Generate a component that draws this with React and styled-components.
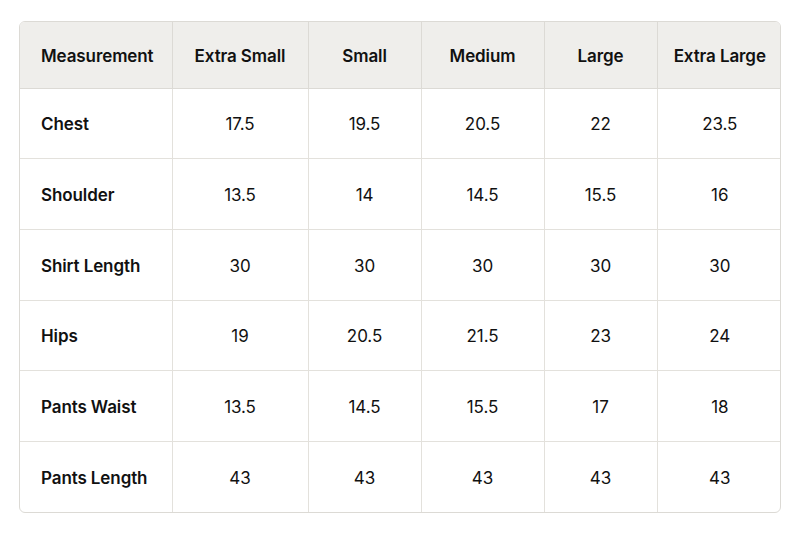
import React from 'react';
import styled, { createGlobalStyle } from 'styled-components';

const GlobalStyle = createGlobalStyle`
  html, body {
    margin: 0;
    padding: 0;
    background: #ffffff;
  }
  body {
    font-family: Inter, "Liberation Sans", sans-serif;
    color: #111111;
  }
`;

const columns = [
  { label: 'Measurement', width: 152 },
  { label: 'Extra Small', width: 136 },
  { label: 'Small', width: 113 },
  { label: 'Medium', width: 123 },
  { label: 'Large', width: 113 },
  { label: 'Extra Large', width: 125 },
];

const rows = [
  ['Chest', '17.5', '19.5', '20.5', '22', '23.5'],
  ['Shoulder', '13.5', '14', '14.5', '15.5', '16'],
  ['Shirt Length', '30', '30', '30', '30', '30'],
  ['Hips', '19', '20.5', '21.5', '23', '24'],
  ['Pants Waist', '13.5', '14.5', '15.5', '17', '18'],
  ['Pants Length', '43', '43', '43', '43', '43'],
];

const Page = styled.div`
  padding: 21px 19px;
`;

const Frame = styled.div`
  width: 762px;
  border: 1px solid #dcdad5;
  border-radius: 6px;
  overflow: hidden;
  box-sizing: border-box;
`;

const Table = styled.table`
  width: 100%;
  border-collapse: collapse;
  table-layout: fixed;
`;

const HeadCell = styled.th`
  height: 66px;
  padding: 2px ${(p) => (p.$first ? '21px' : '6px')} 0;
  background: #efeeeb;
  font-size: 17px;
  font-weight: 600;
  letter-spacing: -0.1px;
  text-align: ${(p) => (p.$first ? 'left' : 'center')};
  border-right: 1px solid #dcdad5;
  border-bottom: 1px solid #dcdad5;
  box-sizing: border-box;
  &:last-child {
    border-right: none;
  }
`;

const Cell = styled.td`
  height: 70.7px;
  padding: 2px ${(p) => (p.$first ? '21px' : '6px')} 0;
  font-size: 17px;
  font-weight: ${(p) => (p.$first ? 600 : 400)};
  letter-spacing: -0.1px;
  text-align: ${(p) => (p.$first ? 'left' : 'center')};
  border-right: 1px solid #e3e1dc;
  border-bottom: 1px solid #e3e1dc;
  box-sizing: border-box;
  &:last-child {
    border-right: none;
  }
  tr:last-child > & {
    border-bottom: none;
  }
`;

export default function App() {
  return (
    <>
      <GlobalStyle />
      <Page>
        <Frame>
          <Table>
            <colgroup>
              {columns.map((c) => (
                <col key={c.label} style={{ width: c.width }} />
              ))}
            </colgroup>
            <thead>
              <tr>
                {columns.map((c, i) => (
                  <HeadCell key={c.label} $first={i === 0}>
                    {c.label}
                  </HeadCell>
                ))}
              </tr>
            </thead>
            <tbody>
              {rows.map((r) => (
                <tr key={r[0]}>
                  {r.map((v, i) => (
                    <Cell key={i} $first={i === 0}>
                      {v}
                    </Cell>
                  ))}
                </tr>
              ))}
            </tbody>
          </Table>
        </Frame>
      </Page>
    </>
  );
}
